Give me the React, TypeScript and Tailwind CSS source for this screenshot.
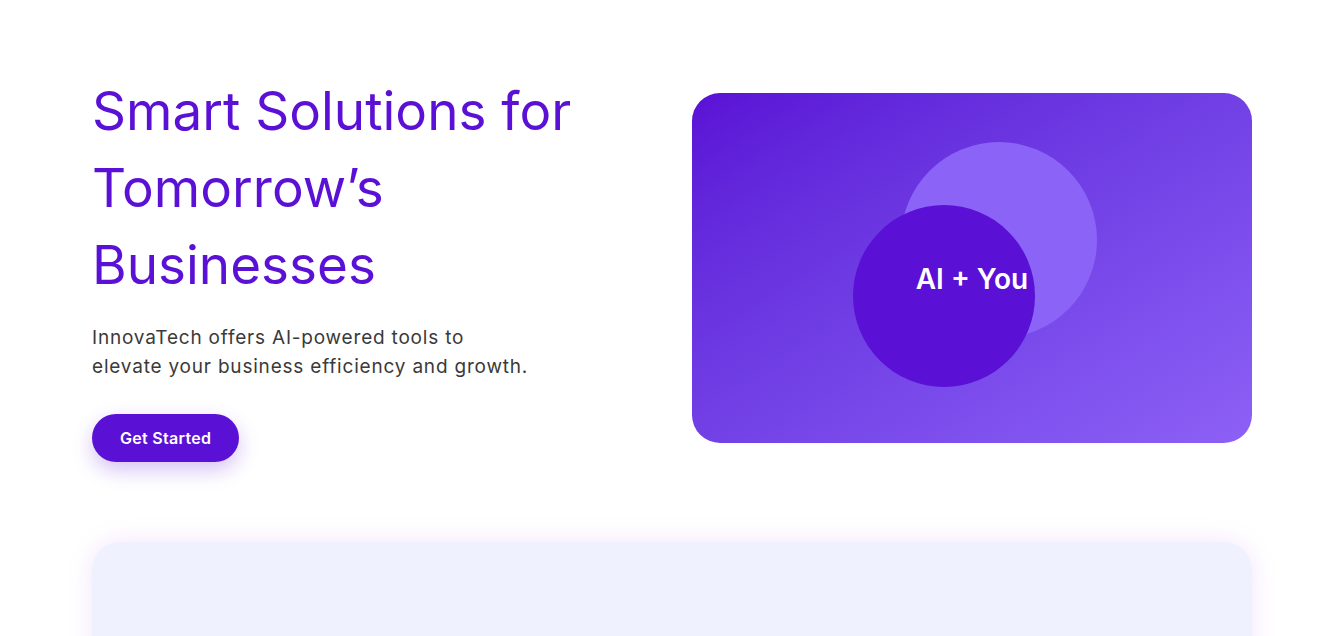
export default function App() {
  return (
    <div className="min-h-screen bg-white" style={{ fontFamily: "Inter, 'Noto Sans', sans-serif" }}>
      {/* Hero */}
      <section className="pl-[92px] pr-[88px] pt-[73px] pb-[80px]">
        <div className="grid grid-cols-2 gap-10 items-center">
          <div>
            <h1 className="text-[53px] leading-[77px] font-normal text-[#5a10d5]">
              Smart Solutions for Tomorrow’s Businesses
            </h1>
            <p className="mt-[19px] max-w-[448px] text-[19px] leading-[29px] tracking-[0.8px] text-[#3a3a3a]">
              InnovaTech offers AI-powered tools to elevate your business efficiency and growth.
            </p>
            <button className="mt-[33px] h-12 px-7 rounded-full bg-[#5a10d5] text-white text-[16px] font-semibold tracking-[0.3px] shadow-[0_8px_20px_rgba(90,16,213,0.25)]">
              Get Started
            </button>
          </div>

          <div className="relative h-[350px] rounded-[28px] overflow-hidden bg-gradient-to-br from-[#5a10d5] to-[#8d60f6]">
            <div className="absolute top-[49px] right-[155px] w-[196px] h-[196px] rounded-full bg-[#8b64f7]" />
            <div className="absolute top-[112px] left-[161px] w-[182px] h-[182px] rounded-full bg-[#5a10d5]" />
            <div className="absolute inset-0 flex items-center justify-center pt-[22px]">
              <span className="text-[28px] font-semibold text-white">AI + You</span>
            </div>
          </div>
        </div>
      </section>

      {/* Features panel */}
      <section className="pl-[92px] pr-[88px]">
        <div className="h-[300px] rounded-[28px] bg-[#f0f1ff] shadow-[0_0_24px_rgba(200,120,240,0.2)]" />
      </section>
    </div>
  );
}
